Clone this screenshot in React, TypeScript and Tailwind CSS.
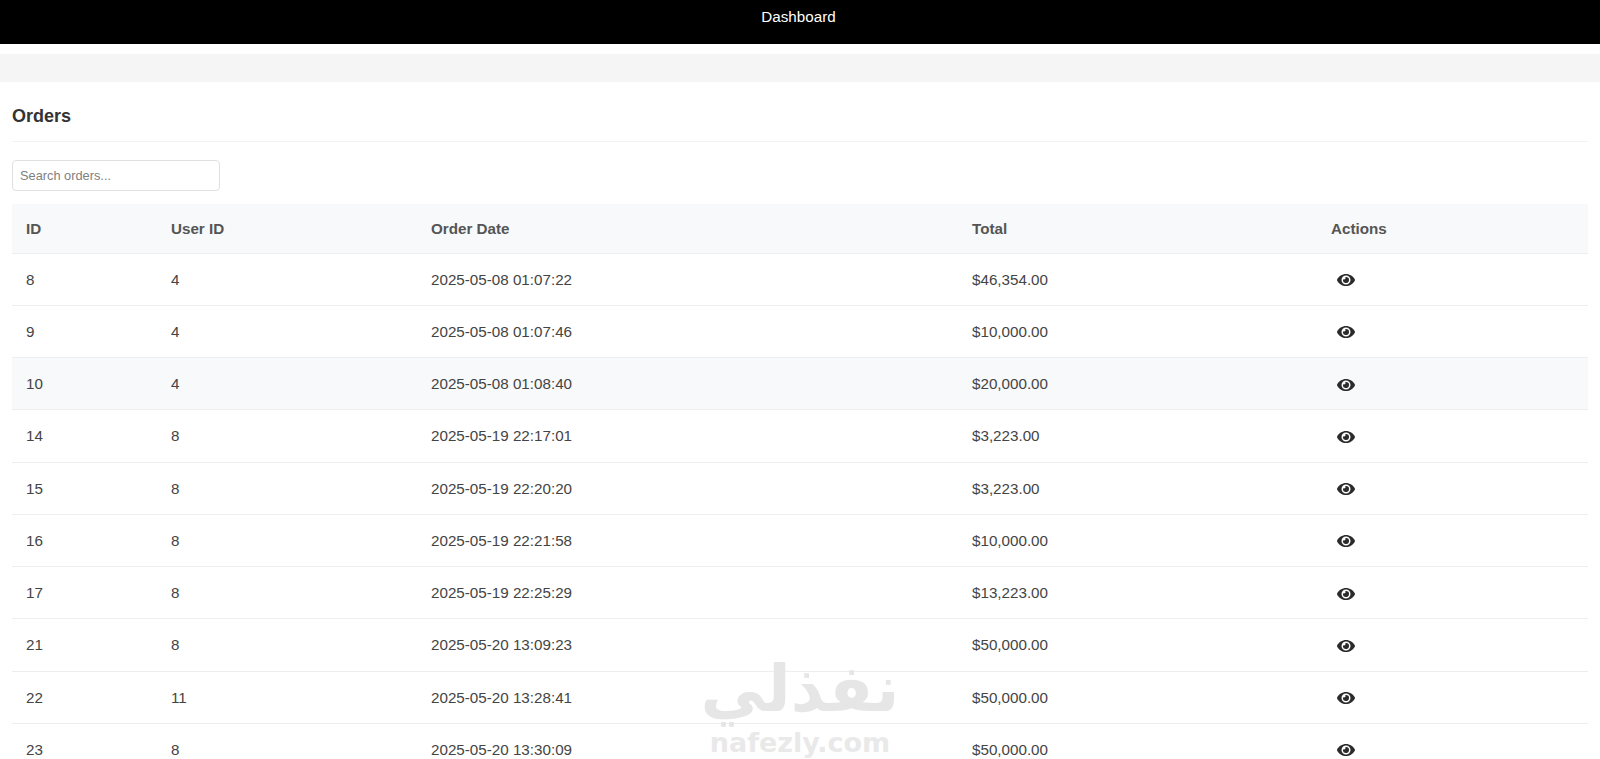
import { FaEye } from "react-icons/fa";

const orders = [
  { id: 8, userId: 4, date: "2025-05-08 01:07:22", total: "$46,354.00" },
  { id: 9, userId: 4, date: "2025-05-08 01:07:46", total: "$10,000.00" },
  { id: 10, userId: 4, date: "2025-05-08 01:08:40", total: "$20,000.00", hover: true },
  { id: 14, userId: 8, date: "2025-05-19 22:17:01", total: "$3,223.00" },
  { id: 15, userId: 8, date: "2025-05-19 22:20:20", total: "$3,223.00" },
  { id: 16, userId: 8, date: "2025-05-19 22:21:58", total: "$10,000.00" },
  { id: 17, userId: 8, date: "2025-05-19 22:25:29", total: "$13,223.00" },
  { id: 21, userId: 8, date: "2025-05-20 13:09:23", total: "$50,000.00" },
  { id: 22, userId: 11, date: "2025-05-20 13:28:41", total: "$50,000.00" },
  { id: 23, userId: 8, date: "2025-05-20 13:30:09", total: "$50,000.00" },
];

export default function App() {
  return (
    <div className="relative h-[759px] overflow-hidden bg-white font-['Liberation_Sans',Arial,sans-serif] text-[#444]">
      <div className="h-11 bg-black pt-[7px] pr-[3px] text-center text-[15.2px] leading-[20px] text-white">Dashboard</div>
      <div className="mt-2.5 h-[28px] bg-[#f5f5f5]" />

      <div className="px-3 pt-[24px]">
        <h2 className="border-b border-[#f1f2f3] pb-[14px] text-[18px] leading-[21px] font-bold text-[#333]">Orders</h2>

        <input
          className="mt-[18px] block h-[31px] w-[208px] rounded border border-[#e0e0e3] px-[7px] text-[12.8px] text-[#444] placeholder:text-[#808080]"
          placeholder="Search orders..."
        />

        <table className="mt-[13px] w-full table-fixed border-collapse text-left text-[15.2px]">
          <thead>
            <tr className="h-[49px] border-b border-[#eceeef] bg-[#f8f9fa] text-[#555]">
              <th className="w-[145px] pt-[2px] pl-[14px] font-bold">ID</th>
              <th className="w-[260px] pt-[2px] pl-[14px] font-bold">User ID</th>
              <th className="w-[541px] pt-[2px] pl-[14px] font-bold">Order Date</th>
              <th className="w-[359px] pt-[2px] pl-[14px] font-bold">Total</th>
              <th className="pt-[2px] pl-[14px] font-bold">Actions</th>
            </tr>
          </thead>
          <tbody>
            {orders.map((order) => (
              <tr key={order.id} className={`h-[52.25px] border-b border-[#eceeef] ${order.hover ? "bg-[#f8f9fa]" : ""}`}>
                <td className="pt-[2px] pl-[14px]">{order.id}</td>
                <td className="pt-[2px] pl-[14px]">{order.userId}</td>
                <td className="pt-[2px] pl-[14px]">{order.date}</td>
                <td className="pt-[2px] pl-[14px]">{order.total}</td>
                <td className="pt-[2px] pl-[20px]">
                  <FaEye size={18} className="text-[#2b2b2b]" />
                </td>
              </tr>
            ))}
          </tbody>
        </table>
      </div>

      <div className="pointer-events-none absolute top-[651px] left-[650px] flex w-[300px] flex-col items-center text-[#e6e6e6]">
        <span dir="rtl" className="font-['DejaVu_Sans',sans-serif] text-[65px] leading-[76px] font-bold">نفذلي</span>
        <span className="font-['DejaVu_Sans',sans-serif] text-[27px] leading-[32px] font-bold text-[#e9e9e9]">nafezly.com</span>
      </div>
    </div>
  );
}
